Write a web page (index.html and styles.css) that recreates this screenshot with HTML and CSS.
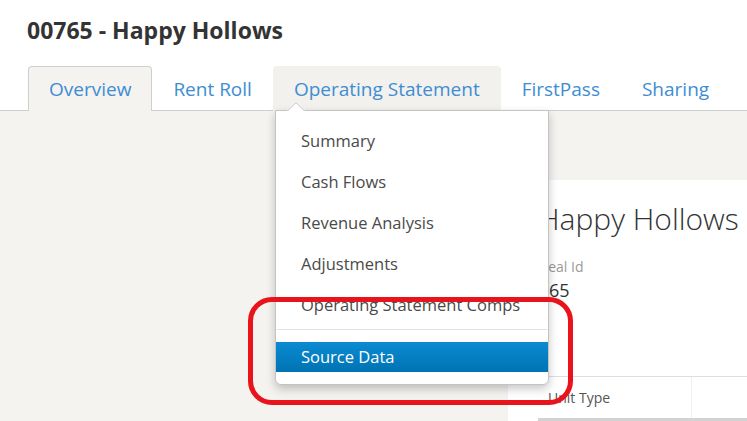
FILE: index.html
```html
<!DOCTYPE html>
<html lang="en">
<head>
<meta charset="utf-8">
<title>00765 - Happy Hollows</title>
<link rel="stylesheet" href="styles.css">
</head>
<body>
<div class="page">
  <header class="page-header">
    <h1 class="page-title">00765 - Happy Hollows</h1>
  </header>
  <nav class="tabs">
    <a class="tab tab-active">Overview</a>
    <a class="tab">Rent Roll</a>
    <a class="tab tab-open">Operating Statement</a>
    <a class="tab">FirstPass</a>
    <a class="tab">Sharing</a>
  </nav>
  <main class="main">
    <section class="card">
      <div class="card-head">
        <h2 class="deal-name">Happy Hollows</h2>
        <div class="field-label">Deal Id</div>
        <div class="field-value">00765</div>
      </div>
      <div class="card-section">
        <div class="grid-head">
          <div class="grid-cell grid-cell-first">Unit Type</div>
          <div class="grid-cell"></div>
        </div>
      </div>
    </section>
  </main>

  <div class="dropdown">
    <svg class="dropdown-caret" width="18" height="9" viewBox="0 0 18 9"><polygon points="0,9 9,0.5 18,9" fill="#ffffff"/><polyline points="0.5,9 9,0.8 17.5,9" fill="none" stroke="#c8c8c8" stroke-width="1"/></svg>
    <ul class="menu">
      <li class="menu-item">Summary</li>
      <li class="menu-item">Cash Flows</li>
      <li class="menu-item">Revenue Analysis</li>
      <li class="menu-item">Adjustments</li>
      <li class="menu-item">Operating Statement Comps</li>
      <li class="menu-divider"></li>
      <li class="menu-item menu-item-active">Source Data</li>
    </ul>
  </div>

  <div class="annotation"></div>
</div>
</body>
</html>
```
FILE: styles.css
```css
html, body {
  margin: 0;
  padding: 0;
  background: #ffffff;
  overflow: hidden;
}
body {
  font-family: "Open Sans", "DejaVu Sans", sans-serif;
  color: #333333;
}
.page {
  position: relative;
  width: 747px;
  height: 421px;
  overflow: hidden;
}
.page-header {
  padding: 15px 0 0 27px;
  height: 66px;
  box-sizing: border-box;
}
.page-title {
  margin: 0;
  font-size: 23px;
  line-height: 30px;
  font-weight: 700;
  color: #333333;
}
.tabs {
  display: flex;
  height: 44px;
  padding-left: 28px;
  border-bottom: 1px solid #cfcfcf;
  box-sizing: content-box;
}
.tab {
  display: flex;
  align-items: center;
  padding: 0 20px;
  font-size: 19px;
  color: #3e8dd2;
  border: 1px solid transparent;
  border-bottom: none;
  border-radius: 4px 4px 0 0;
  margin-bottom: -1px;
  height: 44px;
  box-sizing: content-box;
}
.tab-active {
  background: #f4f3f0;
  border-color: #cfcfcf;
}
.tab-open {
  background: #f2f1ee;
}
.main {
  background: #f4f3f0;
  height: 310px;
  padding-top: 69px;
  box-sizing: border-box;
  display: flex;
}
.card {
  margin-left: 508px;
  flex: 1;
  background: #ffffff;
}
.card-head {
  padding: 18px 0 0 30px;
}
.deal-name {
  margin: 0;
  font-size: 30px;
  line-height: 42px;
  font-weight: 300;
  color: #333333;
  white-space: nowrap;
}
.field-label {
  margin-top: 17px;
  font-size: 14px;
  line-height: 20px;
  color: #9a9a9a;
}
.field-value {
  margin-top: 1px;
  margin-left: -20px;
  font-size: 18px;
  line-height: 24px;
  color: #333333;
}
.card-section {
  margin-top: 74px;
  border-top: 1px solid #dedede;
  padding-left: 30px;
}
.grid-head {
  display: flex;
  height: 41px;
  border-bottom: 3px solid #d3d3d3;
}
.grid-cell {
  display: flex;
  align-items: center;
  padding: 0 10px;
  font-size: 14px;
  color: #555555;
  flex: 1;
}
.grid-cell-first {
  flex: 0 0 133px;
  border-right: 1px solid #efefef;
}

.dropdown {
  position: absolute;
  left: 275px;
  top: 110px;
  width: 274px;
  height: 275px;
  box-sizing: border-box;
  background: #ffffff;
  border: 1px solid #c4c4c4;
  border-radius: 0 0 6px 6px;
  box-shadow: 0 4px 10px rgba(0, 0, 0, 0.22);
}
.dropdown-caret {
  position: absolute;
  left: 11px;
  top: -9px;
  display: block;
}
.menu {
  list-style: none;
  margin: 0;
  padding: 9px 0 0 0;
}
.menu-item {
  padding: 0 25px;
  font-size: 16.5px;
  line-height: 41px;
  color: #4a4a4a;
  white-space: nowrap;
}
.menu-divider {
  height: 1px;
  margin: 4px 1px 12px 1px;
  background: #e2e2e2;
}
.menu-item-active {
  line-height: 30px;
  color: #ffffff;
  background: linear-gradient(#0a8bd2, #0073b3);
}

.annotation {
  position: absolute;
  left: 248px;
  top: 297px;
  width: 325px;
  height: 108px;
  box-sizing: border-box;
  border: 5px solid #e8131b;
  border-radius: 24px;
}
```
